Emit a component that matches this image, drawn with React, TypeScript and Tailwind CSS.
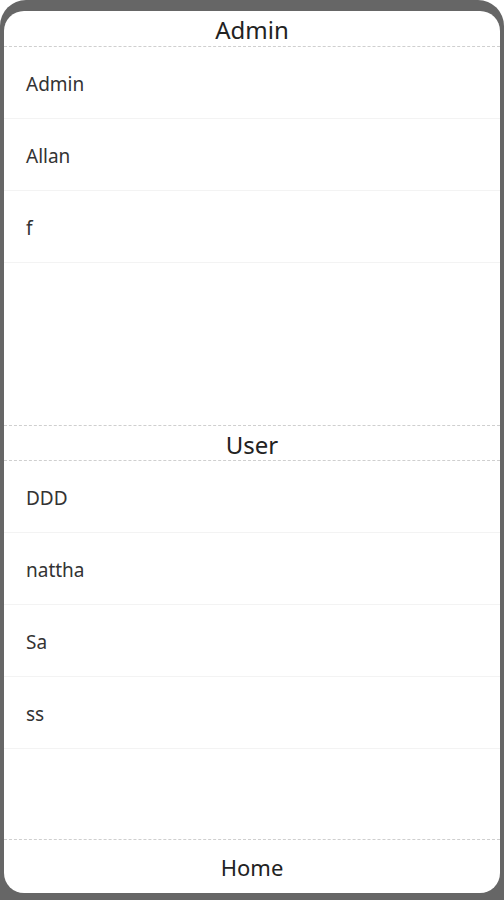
import React from 'react'

const admins = ['Admin', 'Allan', 'f']
const users = ['DDD', 'nattha', 'Sa', 'ss']

function Section({ title, items, first }: { title: string; items: string[]; first?: boolean }) {
  return (
    <div className="flex h-[414px] flex-col">
      <div
        className={
          'flex h-[36px] shrink-0 items-center justify-center border-b border-dashed border-[#cfcfcf] pt-[3px] text-[24px] text-[#222] ' +
          (first ? '' : 'border-t')
        }
      >
        {title}
      </div>
      <div className="flex-1">
        {items.map((name) => (
          <div
            key={name}
            className="flex h-[72px] items-center border-b border-[#f3f3f3] pl-[22px] pt-[3px] text-[19px] text-[#333]"
          >
            {name}
          </div>
        ))}
      </div>
    </div>
  )
}

export default function App() {
  return (
    <div className="h-[900px] w-[504px] bg-white" style={{ fontFamily: '"Noto Sans", "Open Sans", sans-serif' }}>
      <div className="flex h-full flex-col rounded-t-[26px] bg-[#666] px-[4px] pb-[7px] pt-[11px]">
        <div className="flex flex-1 flex-col overflow-hidden rounded-[20px] bg-white">
          <Section title="Admin" items={admins} first />
          <Section title="User" items={users} />
          <div className="flex flex-1 items-center justify-center border-t border-dashed border-[#cfcfcf] pt-[2px] text-[22px] text-[#222]">
            Home
          </div>
        </div>
      </div>
    </div>
  )
}
